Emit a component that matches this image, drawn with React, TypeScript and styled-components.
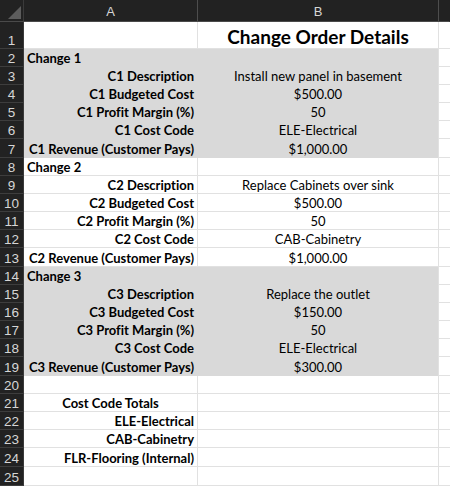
import styled, {createGlobalStyle} from "styled-components";

const GlobalStyle = createGlobalStyle`
  html, body {
    margin: 0;
    padding: 0;
    background: #ffffff;
  }
  body {
    font-family: Lato, "Liberation Sans", sans-serif;
    font-variant-ligatures: none;
    overflow: hidden;
  }
`;

type Align = 'left' | 'center' | 'right';

interface Row {
  a?: string;
  b?: string;
  alignA?: Align;
  boldA?: boolean;
  fill?: boolean;
  height: number;
}

const GRAY = '#d9d9d9';
const GRID = '#e1e1e1';

function changeRows(n: number, desc: string, cost: string, code: string, revenue: string, fill: boolean): Row[] {
  return [
    { a: `Change ${n}`, alignA: 'left', boldA: true, fill, height: 18 },
    { a: `C${n} Description`, b: desc, alignA: 'right', boldA: true, fill, height: 18 },
    { a: `C${n} Budgeted Cost`, b: cost, alignA: 'right', boldA: true, fill, height: 18 },
    { a: `C${n} Profit Margin (%)`, b: '50', alignA: 'right', boldA: true, fill, height: 18 },
    { a: `C${n} Cost Code`, b: code, alignA: 'right', boldA: true, fill, height: 18 },
    { a: `C${n} Revenue (Customer Pays)`, b: revenue, alignA: 'right', boldA: true, fill, height: 19 },
  ];
}

const rows: Row[] = [
  ...changeRows(1, 'Install new panel in basement', '$500.00', 'ELE-Electrical', '$1,000.00', true),
  ...changeRows(2, 'Replace Cabinets over sink', '$500.00', 'CAB-Cabinetry', '$1,000.00', false),
  ...changeRows(3, 'Replace the outlet', '$150.00', 'ELE-Electrical', '$300.00', true),
  { height: 18 },
  { a: 'Cost Code Totals', alignA: 'center', boldA: true, height: 18 },
  { a: 'ELE-Electrical', alignA: 'right', boldA: true, height: 18 },
  { a: 'CAB-Cabinetry', alignA: 'right', boldA: true, height: 18 },
  { a: 'FLR-Flooring (Internal)', alignA: 'right', boldA: true, height: 19 },
  { height: 19 },
];

const Sheet = styled.div<{ $rows: string }>`
  display: grid;
  grid-template-columns: 24px 174px 241px 1fr;
  grid-template-rows: ${p => p.$rows};
  width: 450px;
  height: 486px;
  overflow: hidden;
`;

const Corner = styled.div`
  position: relative;
  background: #222222;
  border-right: 1px solid #3a3a3a;
  border-bottom: 1px solid #4a4a4a;
  box-sizing: border-box;

  &::after {
    content: '';
    position: absolute;
    right: 2px;
    bottom: 2px;
    width: 0;
    height: 0;
    border-left: 13px solid transparent;
    border-bottom: 13px solid #5c5c5c;
  }
`;

const ColHead = styled.div<{ $last?: boolean }>`
  background: #222222;
  color: #d6d6d6;
  font-family: "Liberation Sans", Arial, sans-serif;
  font-size: 13px;
  display: flex;
  align-items: center;
  justify-content: center;
  padding-top: 1px;
  box-sizing: border-box;
  border-right: 1px solid ${p => p.$last ? '#222222' : '#4d4d4d'};
  border-bottom: 1px solid #4a4a4a;
`;

const RowNum = styled.div`
  background: #222222;
  color: #d6d6d6;
  font-family: "Liberation Sans", Arial, sans-serif;
  font-size: 13.5px;
  display: flex;
  align-items: flex-end;
  justify-content: center;
  padding-bottom: 0;
  box-sizing: border-box;
  border-right: 1px solid #3a3a3a;
  border-bottom: 1px solid #3d3d3d;
`;

const Cell = styled.div<{ $align?: Align; $bold?: boolean; $fill?: boolean; $title?: boolean }>`
  display: flex;
  align-items: flex-end;
  justify-content: ${p => p.$align === 'left' ? 'flex-start' : p.$align === 'right' ? 'flex-end' : 'center'};
  padding: 0 3px 0 3px;
  box-sizing: border-box;
  background: ${p => p.$fill ? GRAY : '#ffffff'};
  border-right: 1px solid ${p => p.$fill ? GRAY : GRID};
  border-bottom: 1px solid ${p => p.$fill ? GRAY : GRID};
  color: #000000;
  font-size: ${p => p.$title ? '19px' : '13px'};
  font-weight: ${p => p.$bold ? 700 : 400};
  line-height: ${p => p.$title ? '23px' : '16px'};
  white-space: nowrap;
  overflow: visible;
`;

const EdgeCell = styled.div`
  background: #ffffff;
  border-left: 1px solid ${GRID};
  border-bottom: 1px solid ${GRID};
  margin-left: -1px;
  box-sizing: border-box;
`;

export default function App() {
  const template = ['22px', '27px', ...rows.map(r => `${r.height}px`)].join(' ');
  return (
    <>
      <GlobalStyle />
      <Sheet $rows={template}>
        <Corner />
        <ColHead>A</ColHead>
        <ColHead>B</ColHead>
        <ColHead $last />

        <RowNum>1</RowNum>
        <Cell />
        <Cell $bold $title>Change Order Details</Cell>
        <EdgeCell />

        {rows.map((r, i) => (
          <Row key={i} row={r} num={i + 2} />
        ))}
      </Sheet>
    </>
  );
}

function Row({ row, num }: { row: Row; num: number }) {
  return (
    <>
      <RowNum>{num}</RowNum>
      <Cell $align={row.alignA} $bold={row.boldA} $fill={row.fill}>{row.a}</Cell>
      <Cell $fill={row.fill}>{row.b}</Cell>
      <EdgeCell />
    </>
  );
}
